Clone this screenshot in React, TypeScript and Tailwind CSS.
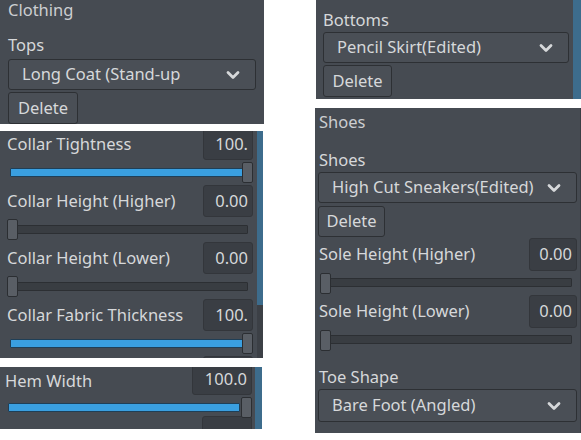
import React from 'react';

const font = { fontFamily: '"Noto Sans", "Open Sans", sans-serif' };

function Chevron() {
  return (
    <svg width="14" height="10" viewBox="0 0 14 10" className="shrink-0">
      <path d="M2 2.5 L7 7.5 L12 2.5" fill="none" stroke="#d6d8da" strokeWidth="2.8" strokeLinecap="round" strokeLinejoin="round" />
    </svg>
  );
}

function Select({ label, className = '' }: { label: string; className?: string }) {
  return (
    <div
      className={`flex items-center justify-between pl-[13px] pr-[15px] rounded-[3px] border border-[#2d3034] bg-[#4a4f56] text-[16.5px] text-[#d6d8da] whitespace-nowrap overflow-hidden ${className}`}
    >
      <span>{label}</span>
      <Chevron />
    </div>
  );
}

function DeleteButton({ className = '' }: { className?: string }) {
  return (
    <div
      className={`flex items-center justify-center rounded-[3px] border border-[#2d3034] bg-[#4a4f56] text-[16.5px] text-[#d6d8da] ${className}`}
    >
      Delete
    </div>
  );
}

function ValueBox({ value, className = '' }: { value: string; className?: string }) {
  return (
    <div
      className={`flex items-center justify-end pr-[4px] rounded-[3px] border border-[#33363b] bg-[#3a3e44] text-[16.5px] text-[#d6d8da] shrink-0 ${className}`}
    >
      {value}
    </div>
  );
}

function Slider({ full, trackClass, handleClass }: { full: boolean; trackClass: string; handleClass: string }) {
  return (
    <div className="relative h-full">
      <div
        className={`absolute h-[9px] rounded-[1px] border ${
          full ? 'bg-[#3a9fe0] border-[#1f3f57]' : 'bg-[#393d42] border-[#2c2f33]'
        } ${trackClass}`}
      />
      <div
        className={`absolute w-[11px] h-[21px] rounded-[2px] border border-[#2b2e32] bg-[#595e65] ${
          full ? 'right-0' : ''
        } ${handleClass}`}
      />
    </div>
  );
}

function SliderRow({ label, value, full }: { label: string; value: string; full: boolean }) {
  return (
    <div className="h-[57px] shrink-0 flex flex-col">
      <div className="h-[32px] flex items-center justify-between">
        <span className="text-[16.5px] text-[#d6d8da] whitespace-nowrap">{label}</span>
        <ValueBox value={value} className="w-[50px] h-[32px]" />
      </div>
      <div className="h-[25px]">
        <Slider full={full} trackClass="top-[8px] left-[3px] right-[5px]" handleClass={full ? 'top-[2px]' : 'top-[2px] left-0'} />
      </div>
    </div>
  );
}

export default function App() {
  return (
    <div className="w-[581px] h-[440px] bg-white flex overflow-hidden" style={font}>
      {/* left column */}
      <div className="w-[264px] flex flex-col">
        {/* Clothing / Tops */}
        <div className="h-[124px] w-[264px] flex bg-[#464b52] overflow-hidden">
          <div className="flex-1 px-[8px] flex flex-col">
            <div className="mt-0 h-[20px] leading-[20px] text-[16.5px] text-[#ccced1]">Clothing</div>
            <div className="mt-[15px] h-[20px] leading-[20px] text-[16.5px] text-[#d6d8da]">Tops</div>
            <Select label="Long Coat (Stand-up" className="mt-[4px] h-[31px] w-[248px] shrink-0" />
            <DeleteButton className="mt-[2px] h-[32px] w-[70px] shrink-0" />
          </div>
          <div className="w-[5px] bg-[#3d6c8c]" />
        </div>

        {/* Collar sliders */}
        <div className="mt-[7px] h-[227px] w-[263px] flex bg-[#464b52] overflow-hidden">
          <div className="flex-1 pl-[7px] pr-[4px] flex flex-col">
            <div className="mt-[-3px]" />
            <SliderRow label="Collar Tightness" value="100." full />
            <SliderRow label="Collar Height (Higher)" value="0.00" full={false} />
            <SliderRow label="Collar Height (Lower)" value="0.00" full={false} />
            <SliderRow label="Collar Fabric Thickness" value="100." full />
            <div className="flex justify-end">
              <ValueBox value="" className="w-[50px] h-[32px]" />
            </div>
          </div>
          <div className="w-[6px] flex flex-col">
            <div className="h-[174px] bg-[#3d6c8c]" />
            <div className="flex-1 bg-[#3c4046]" />
          </div>
        </div>

        {/* Hem width */}
        <div className="mt-[9px] h-[62px] w-[262px] flex bg-[#464b52] overflow-hidden">
          <div className="flex-1 pl-[5px] pr-[3px] flex flex-col">
            <div className="mt-[-4px] h-[32px] flex items-center justify-between shrink-0">
              <span className="text-[16.5px] text-[#d6d8da] mt-[4px]">Hem Width</span>
              <ValueBox value="100.0" className="w-[60px] h-[32px]" />
            </div>
            <div className="h-[24px] shrink-0">
              <Slider full trackClass="top-[8px] left-[3px] right-[12px]" handleClass="top-[2px]" />
            </div>
            <div className="flex justify-end mt-[-3px]">
              <ValueBox value="" className="w-[50px] h-[32px]" />
            </div>
          </div>
          <div className="w-[7px] bg-[#3d6c8c]" />
        </div>
      </div>

      {/* right column */}
      <div className="ml-[51px] w-[266px] flex flex-col">
        {/* Bottoms */}
        <div className="ml-[1px] h-[99px] w-[265px] flex bg-[#464b52] overflow-hidden">
          <div className="flex-1 pl-[7px] flex flex-col">
            <div className="mt-[10px] h-[20px] leading-[20px] text-[16.5px] text-[#d6d8da]">Bottoms</div>
            <Select label="Pencil Skirt(Edited)" className="mt-[2px] h-[31px] w-[246px] shrink-0" />
            <DeleteButton className="mt-[2px] h-[32px] w-[69px] shrink-0" />
          </div>
          <div className="w-[8px] bg-[#3d6c8c]" />
        </div>

        {/* Shoes */}
        <div className="mt-[9px] h-[325px] w-[266px] bg-[#464b52] border-r border-[#3a3e44] overflow-hidden flex flex-col">
          <div className="pl-[4px] mt-[4px] h-[20px] leading-[20px] text-[16.5px] text-[#ccced1]">Shoes</div>
          <div className="pl-[4px] mt-[18px] h-[20px] leading-[20px] text-[16.5px] text-[#d6d8da]">Shoes</div>
          <div className="px-[3px] flex flex-col">
            <Select label="High Cut Sneakers(Edited)" className="mt-[2px] h-[31px] w-full shrink-0" />
            <DeleteButton className="mt-[3px] h-[31px] w-[67px] shrink-0" />
          </div>
          <div className="pl-[4px] pr-[3px] mt-[1px] flex flex-col">
            {[
              { label: 'Sole Height (Higher)' },
              { label: 'Sole Height (Lower)' },
            ].map((row) => (
              <div key={row.label} className="h-[57px] shrink-0 flex flex-col">
                <div className="h-[33px] flex items-center justify-between">
                  <span className="text-[16.5px] text-[#d6d8da] whitespace-nowrap">{row.label}</span>
                  <ValueBox value="0.00" className="w-[48px] h-[33px]" />
                </div>
                <div className="h-[24px]">
                  <Slider full={false} trackClass="top-[7px] left-[1px] right-[5px]" handleClass="top-[2px] left-[1px]" />
                </div>
              </div>
            ))}
          </div>
          <div className="pl-[4px] mt-[15px] h-[20px] leading-[20px] text-[16.5px] text-[#d6d8da]">Toe Shape</div>
          <div className="px-[3px]">
            <Select label="Bare Foot (Angled)" className="mt-[2px] h-[33px] w-full" />
          </div>
        </div>
      </div>
    </div>
  );
}
